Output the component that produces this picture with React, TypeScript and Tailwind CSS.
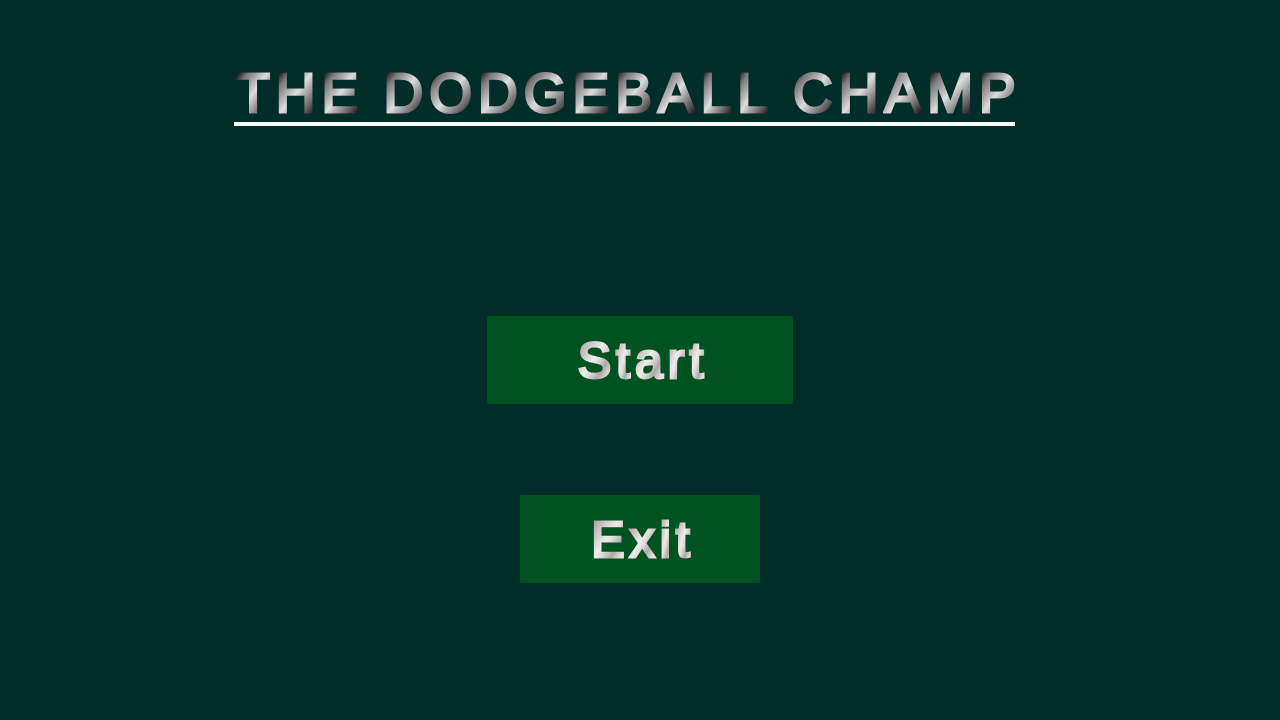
import React from "react";

function MetalText({ text, metal, spaceClass }: { text: string; metal: string; spaceClass: string }) {
  return (
    <>
      {Array.from(text).map((letter, index) =>
        letter === " " ? (
          <span key={index} className={`inline-block whitespace-pre ${spaceClass}`}>{" "}</span>
        ) : (
          <span
            key={index}
            className={`inline-block bg-clip-text pl-[2px] text-transparent ${metal}`}
          >
            {letter}
          </span>
        ),
      )}
    </>
  );
}

const titleMetal =
  "last:-mr-[5px] tracking-[4px] [-webkit-text-stroke:3px_transparent] [stroke-linejoin:round] bg-[linear-gradient(to_bottom_right,#221f1f_14%,#7a7878_25%,#aaa8a8_37%,#dddddd_49%,#a8a6a6_60%,#777575_70%,#221f1f_86%)]";
const buttonMetal =
  "tracking-[3px] [-webkit-text-stroke:3px_transparent] [stroke-linejoin:round] bg-[linear-gradient(to_bottom_right,#a8a0a0_15%,#c8c2c2_28%,#eeebeb_46%,#e0dcdc_54%,#b0a8a8_67%,#e8e4e4_80%)]";
const menuButton =
  "h-[88px] rounded-xs bg-[#005220] pt-[2px] pl-[2px] text-[50px] leading-[60px]";

export default function App() {
  return (
    <main className="flex min-h-screen flex-col items-center bg-[#002d28] font-['Liberation_Sans',Arial,sans-serif]">
      <h1 className="mt-[62px] mr-[31px] border-b-4 border-white pt-[2px] text-[55px] leading-[58px] whitespace-nowrap">
        <MetalText text="THE DODGEBALL CHAMP" metal={titleMetal} spaceClass="tracking-[4px]" />
      </h1>
      <nav aria-label="Main menu" className="mt-[190px] flex flex-col items-center gap-[91px]">
        <button type="button" className={`w-[306px] ${menuButton}`}>
          <MetalText text="Start" metal={buttonMetal} spaceClass="tracking-[5px]" />
        </button>
        <button type="button" className={`w-[240px] ${menuButton}`}>
          <MetalText text="Exit" metal={buttonMetal} spaceClass="tracking-[5px]" />
        </button>
      </nav>
    </main>
  );
}
